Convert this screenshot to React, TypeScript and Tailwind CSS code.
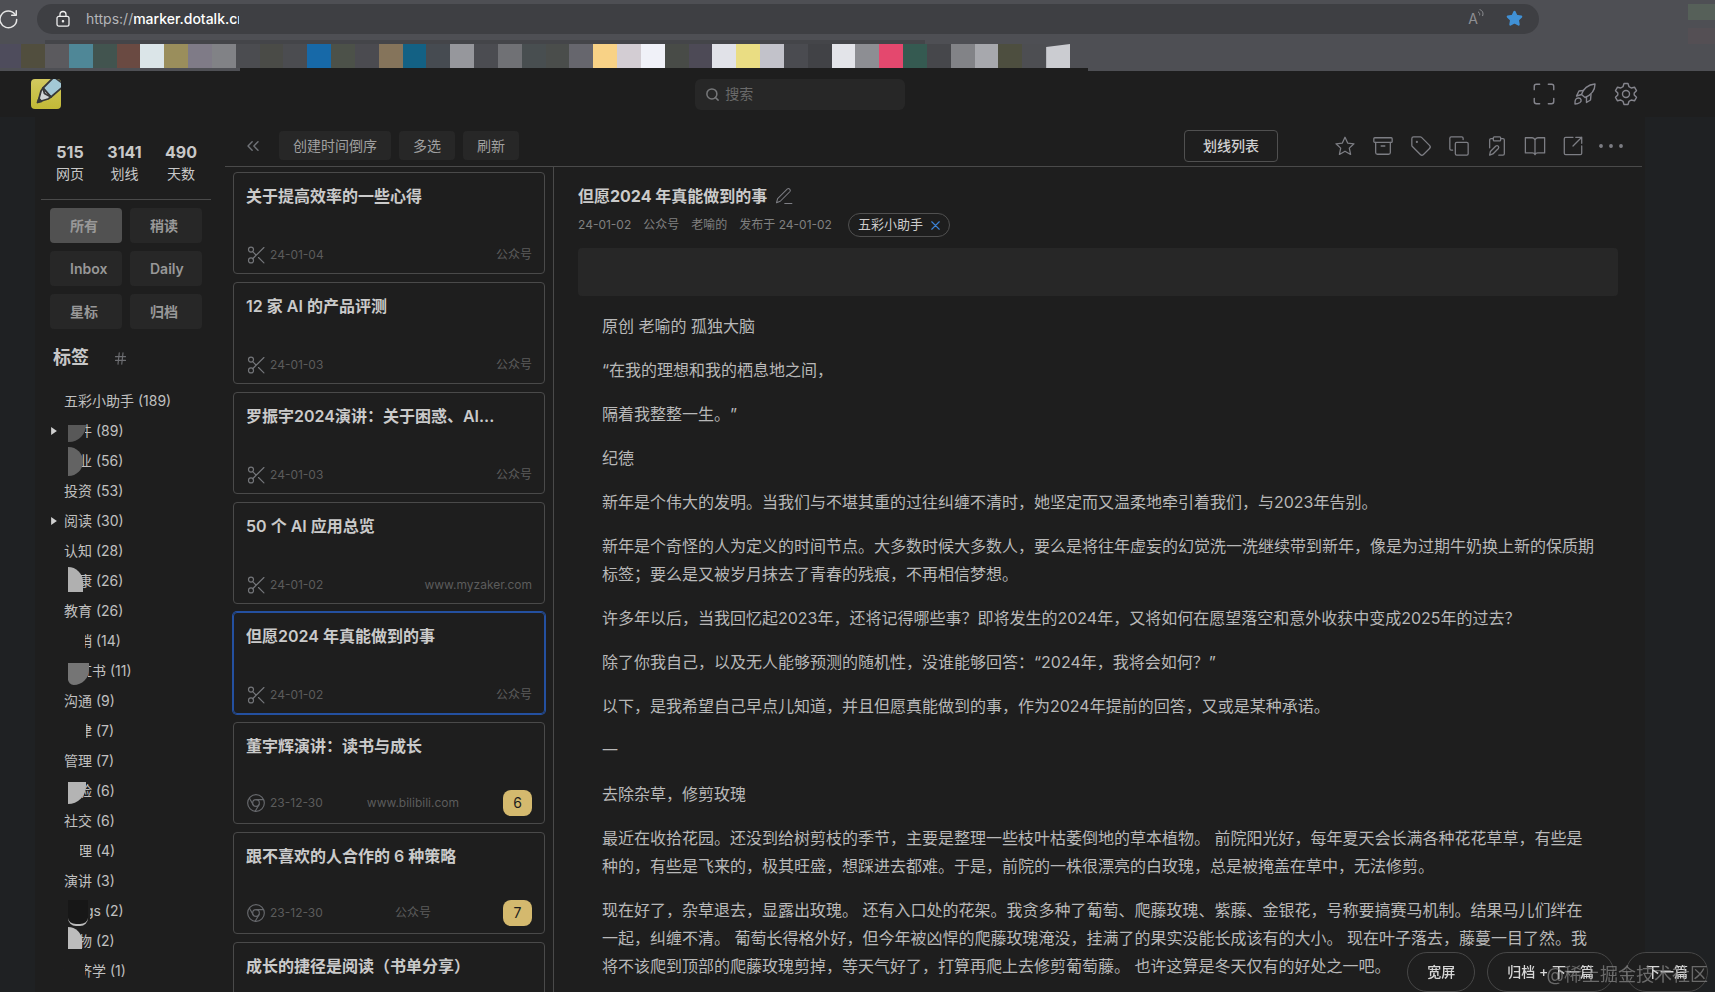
import type { ReactNode } from 'react';
import { Archive, BookOpen, ChevronsLeft, Hash, Maximize, Search, Star, Tag } from 'lucide-react';

type TagItem = {
  name: string;
  count: number;
  open?: boolean;
  cover?: string;
  blob?: string;
};

type Card = {
  title: string;
  date: string;
  source: string;
  notes?: number;
  active?: boolean;
};

const bookmarks = [
  'bg-[#5b5a5e]', 'bg-[#4f8797]', 'bg-[#42544f]', 'bg-[#6a4a42]', 'bg-[#dbe5e8]', 'bg-[#9a8e5c]', 'bg-[#7f7b87]', 'bg-[#818286]',
  'bg-[#4b4c50]', 'bg-[#4a4b47]', 'bg-[#4b4c50]', 'bg-[#1769a8]', 'bg-[#4c5149]', 'bg-[#4b4b50]', 'bg-[#85745b]', 'bg-[#136184]',
  'bg-[#464b51]', 'bg-[#96979c]', 'bg-[#4b4c51]', 'bg-[#707175]', 'bg-[#484e50]', 'bg-[#4a4d4b]', 'bg-[#66666d]', 'bg-[#f8d286]',
  'bg-[#d3cdd3]', 'bg-[#f0f1f8]', 'bg-[#484b47]', 'bg-[#4d4a56]', 'bg-[#e1e2e8]', 'bg-[#eadd83]', 'bg-[#c2c2ca]', 'bg-[#4a4b50]',
  'bg-[#414246]', 'bg-[#e3e4e9]', 'bg-[#8d8e93]', 'bg-[#e4486e]', 'bg-[#355a51]', 'bg-[#46474b]', 'bg-[#828387]', 'bg-[#a7a8ad]',
  'bg-[#4d4e3f]', 'bg-[#4d4e52]', 'bg-[#cbccd1] [clip-path:polygon(0_12%,100%_0,100%_100%,0_100%)]',
];

const stats = [
  { value: 515, label: '网页' },
  { value: 3141, label: '划线' },
  { value: 490, label: '天数' },
];

const filters = ['所有', '稍读', 'Inbox', 'Daily', '星标', '归档'];

const tags: TagItem[] = [
  { name: '五彩小助手', count: 189 },
  { name: '软件', count: 89, open: true, cover: 'w-[21px]', blob: 'top-[9px] h-[17px] w-[18px] rounded-br-full bg-[#585858]' },
  { name: '创业', count: 56, cover: 'w-[17px]', blob: 'top-px h-[29px] w-[15px] rounded-r-full bg-[#636363]' },
  { name: '投资', count: 53 },
  { name: '阅读', count: 30, open: true },
  { name: '认知', count: 28 },
  { name: '健康', count: 26, cover: 'w-[16px]', blob: 'top-px h-[25px] w-[15px] rounded-tr-full bg-[#b0b0b0]' },
  { name: '教育', count: 26 },
  { name: '营销', count: 14, cover: 'w-[21px]' },
  { name: '小红书', count: 11, cover: 'w-[24px]', blob: 'top-[7px] h-[22px] w-[21px] rounded-br-2xl rounded-bl-md bg-[#757575]' },
  { name: '沟通', count: 9 },
  { name: '法律', count: 7, cover: 'w-[22px]' },
  { name: '管理', count: 7 },
  { name: '体验', count: 6, cover: 'w-[18px]', blob: 'top-[6px] h-[22px] w-[18px] rounded-br-full bg-[#b4b4b4]' },
  { name: '社交', count: 6 },
  { name: '心理', count: 4, cover: 'w-[16px]' },
  { name: '演讲', count: 3 },
  { name: 'Blogs', count: 2, cover: 'w-[26px]', blob: 'top-1 h-[26px] w-[20px] rounded-b-lg border-b-2 border-[#bcbcbc] bg-[#171717]' },
  { name: '读物', count: 2, cover: 'w-[15px]', blob: 'top-px h-[22px] w-[14px] rounded-tr-full bg-[#bcbcbc]' },
  { name: '经济学', count: 1, cover: 'w-[21px]' },
];

const cards: Card[] = [
  { title: '关于提高效率的一些心得', date: '24-01-04', source: '公众号' },
  { title: '12 家 AI 的产品评测', date: '24-01-03', source: '公众号' },
  { title: '罗振宇2024演讲：关于困惑、AI...', date: '24-01-03', source: '公众号' },
  { title: '50 个 AI 应用总览', date: '24-01-02', source: 'www.myzaker.com' },
  { title: '但愿2024 年真能做到的事', date: '24-01-02', source: '公众号', active: true },
  { title: '董宇辉演讲：读书与成长', date: '23-12-30', source: 'www.bilibili.com', notes: 6 },
  { title: '跟不喜欢的人合作的 6 种策略', date: '23-12-30', source: '公众号', notes: 7 },
  { title: '成长的捷径是阅读（书单分享）', date: '23-12-30', source: '公众号' },
];

const paragraphs = [
  '原创 老喻的 孤独大脑',
  '“在我的理想和我的栖息地之间，',
  '隔着我整整一生。”',
  '纪德',
  '新年是个伟大的发明。当我们与不堪其重的过往纠缠不清时，她坚定而又温柔地牵引着我们，与2023年告别。',
  '新年是个奇怪的人为定义的时间节点。大多数时候大多数人，要么是将往年虚妄的幻觉洗一洗继续带到新年，像是为过期牛奶换上新的保质期标签；要么是又被岁月抹去了青春的残痕，不再相信梦想。',
  '许多年以后，当我回忆起2023年，还将记得哪些事？即将发生的2024年，又将如何在愿望落空和意外收获中变成2025年的过去？',
  '除了你我自己，以及无人能够预测的随机性，没谁能够回答：“2024年，我将会如何？”',
  '以下，是我希望自己早点儿知道，并且但愿真能做到的事，作为2024年提前的回答，又或是某种承诺。',
  '一',
  '去除杂草，修剪玫瑰',
  '最近在收拾花园。还没到给树剪枝的季节，主要是整理一些枝叶枯萎倒地的草本植物。 前院阳光好，每年夏天会长满各种花花草草，有些是种的，有些是飞来的，极其旺盛，想踩进去都难。于是，前院的一株很漂亮的白玫瑰，总是被掩盖在草中，无法修剪。',
  '现在好了，杂草退去，显露出玫瑰。 还有入口处的花架。我贪多种了葡萄、爬藤玫瑰、紫藤、金银花，号称要搞赛马机制。结果马儿们绊在一起，纠缠不清。 葡萄长得格外好，但今年被凶悍的爬藤玫瑰淹没，挂满了的果实没能长成该有的大小。 现在叶子落去，藤蔓一目了然。我将不该爬到顶部的爬藤玫瑰剪掉，等天气好了，打算再爬上去修剪葡萄藤。 也许这算是冬天仅有的好处之一吧。',
];

function Svg({ children, className = 'size-[22px]' }: { children: ReactNode; className?: string }) {
  return (
    <svg
      className={className}
      viewBox="0 0 24 24"
      fill="none"
      stroke="currentColor"
      strokeWidth={1.4}
      strokeLinecap="round"
      strokeLinejoin="round"
      aria-hidden="true"
    >
      {children}
    </svg>
  );
}

function IconButton({ label, children }: { label: string; children: ReactNode }) {
  return (
    <button type="button" aria-label={label} className="flex size-[22px] items-center justify-center">
      {children}
    </button>
  );
}

function BrowserBar() {
  return (
    <div className="relative h-[71px] shrink-0 bg-[#4e4f54]">
      <div className="flex h-9 items-center gap-5 pt-px">
        <button type="button" aria-label="刷新页面" className="w-[17px] text-[#e6e6e6]">
          <Svg className="size-[20px]">
            <path d="M18 6.5A10 10 0 1 0 20 12.5" strokeWidth={1.8} />
            <path d="M19.5 2v5.5H14" strokeWidth={1.8} />
          </Svg>
        </button>
        <div className="flex h-[30px] w-[1502px] max-w-[88%] items-center rounded-full bg-[#3e3f43] pr-4 pl-[17px]">
          <Svg className="size-[18px] shrink-0 text-[#f0f0f0]">
            <rect x="4" y="8.5" width="16" height="13" rx="2.5" strokeWidth={1.7} />
            <path d="M8 8.5V6a4 4 0 0 1 8 0v2.5" strokeWidth={1.7} />
            <circle cx="12" cy="15" r="1" fill="currentColor" />
          </Svg>
          <div className="ml-[14px] w-[153px] overflow-hidden text-sm whitespace-nowrap text-[#b4b5b8]">
            https://<span className="font-medium text-white">marker.dotalk.cn</span>
          </div>
          <div className="ml-auto flex items-center gap-5">
            <span className="flex text-sm leading-5 text-[#8e8f93]">
              A
              <Svg className="size-2">
                <path d="M1 9c4 2 5 5 4 9M6 2c8 3 11 10 8 18" strokeWidth={3} />
              </Svg>
            </span>
            <Star className="size-[17px] text-[#4091d6]" fill="currentColor" />
          </div>
        </div>
      </div>
      <div className="absolute top-10 left-[45px] h-1 w-[880px] bg-[#444549]" />
      <div className="absolute inset-x-0 top-11 flex h-6">
        <span className="w-[21px] bg-[#4e4c5c]" />
        <span className="w-6 bg-[#514e3e]" />
        <div className="grid w-[1025px] auto-cols-fr grid-flow-col">
          {bookmarks.map((color, i) => (
            <span key={i} className={color} />
          ))}
        </div>
      </div>
      <div className="absolute top-[68px] left-[240px] h-[3px] w-[848px] bg-[#1e1e1e]" />
      <div className="absolute top-1 right-0 h-4 w-[27px] bg-[#566059]" />
      <div className="absolute top-7 right-0 h-4 w-[27px] bg-[#544f54]" />
    </div>
  );
}

function Header() {
  return (
    <header className="flex h-[46px] shrink-0 items-center pr-[78px] pl-[31px]">
      <svg className="size-[30px]" viewBox="0 0 30 30" aria-label="logo">
        <defs>
          <linearGradient id="logo-bg" x1="0" y1="0" x2="0" y2="1">
            <stop offset="0" stopColor="#d2c95f" />
            <stop offset="1" stopColor="#c2b936" />
          </linearGradient>
          <clipPath id="logo-clip">
            <rect width="30" height="30" rx="4" />
          </clipPath>
        </defs>
        <g clipPath="url(#logo-clip)" stroke="#37383a" strokeWidth="1.8" strokeLinejoin="round">
          <rect width="30" height="30" fill="url(#logo-bg)" stroke="none" />
          <path d="M12 9 23-2 34 6 20 18Z" fill="#a3c8d6" />
          <path d="M12 9 20 18 17 20 7 23 10 12Z" fill="#cfd4d6" />
          <path d="M12 9l1.5 5.500 6.500 3.500" fill="none" />
          <path d="M6.500 23.500l1.500-4 2.500 2.800Z" fill="#37383a" />
        </g>
      </svg>
      <label className="ml-[39.5%] flex h-[31px] w-[210px] items-center gap-[5px] rounded-md bg-[#272727] px-[10px]">
        <Search className="size-[15px] text-[#77787a]" strokeWidth={2.4} />
        <input
          type="text"
          aria-label="搜索"
          placeholder="搜索"
          className="min-w-0 flex-1 bg-transparent text-sm outline-none placeholder:text-[#6a6a6a]"
        />
      </label>
      <div className="ml-auto flex items-center gap-[19px] text-[#85858d]">
        <IconButton label="全屏">
          <Maximize className="size-[26px] shrink-0" strokeWidth={1.3} />
        </IconButton>
        <IconButton label="快速开始">
          <Svg className="size-6 shrink-0">
            <path d="M8.5 12.5C10 7 15 2.500 22 2c0 6-4 11-10 13.500Z" />
            <path d="M10.500 8.500 6 9l-2.500 5 5-1.500M13.500 15v5.500l4-2.500 .5-5.500" />
            <path d="M2 22c-.3-4 .7-6 3.500-6s3.500 3 1.500 4.500C5.500 21.500 4 22 2 22Z" />
          </Svg>
        </IconButton>
        <IconButton label="设置">
          <Svg className="size-6 shrink-0">
            <path d="M10 1.500h4l1 3.200 2.200 1.300 3.300-.8 2 3.500-2.300 2.300v2l2.300 2.300-2 3.500-3.300-.8-2.200 1.300-1 3.200h-4l-1-3.200L6.800 18l-3.300.8-2-3.500L3.800 13v-2L1.500 8.700l2-3.500 3.300.8L9 4.700Z" />
            <circle cx="12" cy="12" r="3.500" />
          </Svg>
        </IconButton>
      </div>
    </header>
  );
}

function Sidebar() {
  return (
    <aside className="w-[190px] shrink-0 pt-6 pr-[14px] pl-[6px]">
      <div className="flex justify-between border-b border-[#4a4a4a] pr-[14px] pb-[14px] pl-[15px] text-center text-[#c8c8c8]">
        {stats.map((s) => (
          <div key={s.label}>
            <div className="text-base leading-[22px] font-bold">{s.value}</div>
            <div className="text-sm leading-[22px]">{s.label}</div>
          </div>
        ))}
      </div>
      <div className="mx-[9px] mt-2 grid grid-cols-2 gap-2">
        {filters.map((name, i) => (
          <button
            key={name}
            type="button"
            className={`h-[35px] rounded pl-5 text-left text-sm font-semibold text-[#989898] ${i === 0 ? 'bg-[#515151]' : 'bg-[#272727]'}`}
          >
            {name}
          </button>
        ))}
      </div>
      <div className="mt-[15px] ml-3 flex h-7 items-center gap-6">
        <h2 className="text-lg font-bold text-[#c8c8c8]">标签</h2>
        <Hash className="size-[15px] text-[#6d6e72]" strokeWidth={1.8} />
      </div>
      <ul className="mt-[14px]">
        {tags.map((tag) => (
          <li key={tag.name} className="relative flex h-[30px] items-center pl-[23px] text-sm whitespace-nowrap text-[#c0c0c0]">
            {tag.open && (
              <svg className="absolute left-[9px] size-[8px]" viewBox="0 0 7 7" fill="#d0d0d0" aria-hidden="true">
                <path d="M1 0l5 3.500-5 3.500Z" />
              </svg>
            )}
            <a href="#">{tag.name} ({tag.count})</a>
            {tag.cover && <span className={`absolute left-[23px] h-5 bg-[#1e1e1e] ${tag.cover}`} />}
            {tag.blob && <span className={`absolute left-[27px] ${tag.blob}`} />}
          </li>
        ))}
      </ul>
    </aside>
  );
}

function Toolbar() {
  return (
    <div className="flex h-[50px] shrink-0 items-center border-b border-[#4a4a4a] pt-2 pr-5 pl-[18px] text-sm">
      <button type="button" aria-label="收起" className="text-[#707378]">
        <ChevronsLeft className="size-5" strokeWidth={1.7} />
      </button>
      <div className="ml-4 flex gap-2 text-[#a0a0a0]">
        <button type="button" className="h-[29px] rounded bg-[#272727] px-[14px]">创建时间倒序</button>
        <button type="button" className="h-[29px] rounded bg-[#272727] px-[14px]">多选</button>
        <button type="button" className="h-[29px] rounded bg-[#272727] px-[14px]">刷新</button>
      </div>
      <button type="button" className="ml-auto h-8 rounded border border-[#505050] px-[18px] font-medium text-[#d0d0d0]">
        划线列表
      </button>
      <div className="ml-14 flex gap-4 text-[#7d7e84]">
        <IconButton label="星标">
          <Svg>
            <path d="m12 2.500 2.900 6.300 6.900.8-5.100 4.700 1.400 6.900-6.100-3.500-6.100 3.500 1.400-6.900-5.100-4.700 6.900-.8Z" />
          </Svg>
        </IconButton>
        <IconButton label="归档">
          <Archive className="size-[22px]" strokeWidth={1.4} />
        </IconButton>
        <IconButton label="标签">
          <Tag className="size-[22px]" strokeWidth={1.4} />
        </IconButton>
        <IconButton label="复制">
          <Svg>
            <rect x="8" y="8" width="14" height="14" rx="1.500" />
            <path d="M5 16.500H3.500A1.500 1.500 0 0 1 2 15V3.500A1.500 1.500 0 0 1 3.500 2H15a1.500 1.500 0 0 1 1.500 1.500V5" />
          </Svg>
        </IconButton>
        <IconButton label="笔记">
          <Svg>
            <path d="M8 4H5.500A1.500 1.500 0 0 0 4 5.500V14M16 4h2.500A1.500 1.500 0 0 1 20 5.500v15a1.500 1.500 0 0 1-1.500 1.500H14" />
            <rect x="8" y="2" width="8" height="4.500" rx="1" />
            <path d="M4 22l.8-4 6-6c1.800-1.300 4 .8 2.700 2.700l-6 6Z" />
          </Svg>
        </IconButton>
        <IconButton label="阅读">
          <Svg>
            <path d="M12 5.500C11.500 4 10.500 3 9 3H1.500v16.500H9c1.500 0 2.500.8 3 2 .5-1.200 1.500-2 3-2h7.500V3H15c-1.500 0-2.500 1-3 2.500Zm0 0v16" />
          </Svg>
        </IconButton>
        <IconButton label="打开原文">
          <Svg>
            <path d="M12 2.500H4A1.500 1.500 0 0 0 2.500 4v16A1.500 1.500 0 0 0 4 21.500h16a1.500 1.500 0 0 0 1.500-1.500v-8M15 2.500h6.500V9M21.500 2.500 12 12" />
          </Svg>
        </IconButton>
        <IconButton label="更多">
          <Svg className="size-6 shrink-0">
            <circle cx="2" cy="12" r="1.200" fill="currentColor" />
            <circle cx="12" cy="12" r="1.200" fill="currentColor" />
            <circle cx="22" cy="12" r="1.200" fill="currentColor" />
          </Svg>
        </IconButton>
      </div>
    </div>
  );
}

function CardItem({ card }: { card: Card }) {
  return (
    <li
      className={`flex h-[102px] shrink-0 flex-col justify-between rounded border px-3 pt-[11px] ${card.notes ? 'pb-[7px]' : 'pb-[5px]'} ${
        card.active ? 'border-[#2450a0] ring-1 ring-[#2450a0]' : 'border-[#4a4a4a]'
      }`}
    >
      <h3 className="truncate text-base leading-6 font-semibold text-[#cacaca]">{card.title}</h3>
      <div className="flex h-[26px] items-center justify-between text-xs text-[#5c5c5c]">
        <span className="flex items-center gap-1">
          {card.notes ? (
            <Svg className="size-[20px] text-[#66686c]">
              <circle cx="12" cy="12" r="10" />
              <circle cx="12" cy="12" r="4" />
              <path d="M12 8h9M15.500 14 11 22M8.500 14 4 6" />
            </Svg>
          ) : (
            <Svg className="size-[20px] text-[#74767a]">
              <circle cx="6" cy="5.500" r="3" />
              <circle cx="6" cy="18.500" r="3" />
              <path d="M8 8l4 4M8 16.500 21.500 3M15 15l6.500 6.500" />
            </Svg>
          )}
          {card.date}
        </span>
        <span>{card.source}</span>
        {card.notes && (
          <span className="flex h-[26px] w-[29px] items-center justify-center rounded-lg bg-[#d4b96e] text-sm text-[#1e1e1e]">
            {card.notes}
          </span>
        )}
      </div>
    </li>
  );
}

function Reader() {
  return (
    <article className="min-w-0 flex-1 overflow-hidden px-6 pt-[17px]">
      <div className="flex h-6 items-center gap-2">
        <h1 className="text-base font-bold text-[#cacaca]">但愿2024 年真能做到的事</h1>
        <button type="button" aria-label="编辑标题" className="text-[#7d7e84]">
          <Svg className="size-[18px]">
            <path d="M2 21l1.500-5.500L16.500 2.500c2-1.500 5 1.500 3.500 3.500L7 19Z M13 22h9.500" />
          </Svg>
        </button>
      </div>
      <div className="mt-[5px] flex h-6 items-center text-xs text-[#808080]">
        <span>24-01-02</span>
        <span className="ml-3">公众号</span>
        <span className="ml-3">老喻的</span>
        <span className="ml-3">发布于 24-01-02</span>
        <span className="ml-4 flex h-6 items-center gap-2 rounded-full border border-[#505050] px-[9px] text-[13px] text-[#cccccc]">
          五彩小助手
          <button type="button" aria-label="移除标签" className="text-[#3b82d6]">
            <Svg className="size-[9px]">
              <path d="M2 2l20 20M22 2 2 22" strokeWidth={3} />
            </Svg>
          </button>
        </span>
      </div>
      <div className="mt-[11px] h-12 rounded-sm bg-[#272727]" />
      <div className="mt-4 flex flex-col gap-4 px-6 text-base leading-7 text-[#b8b8b8]">
        {paragraphs.map((text) => (
          <p key={text}>{text}</p>
        ))}
      </div>
    </article>
  );
}

export default function App() {
  return (
    <div className="flex h-screen flex-col overflow-hidden bg-[#1e1e1e] font-['Inter','Noto_Sans_CJK_SC',sans-serif] [text-spacing-trim:space-all]">
      <BrowserBar />
      <Header />
      <div className="flex min-h-0 flex-1 bg-[#1f2123] pr-[70px] pl-[35px]">
        <main className="flex min-w-0 flex-1 overflow-hidden bg-[#1e1e1e] pr-[3px]">
          <Sidebar />
          <section className="flex min-w-0 flex-1 flex-col">
            <Toolbar />
            <div className="flex min-h-0 flex-1">
              <ul className="flex w-[329px] shrink-0 flex-col gap-2 overflow-hidden border-r border-[#4a4a4a] px-2 pt-[5px]">
                {cards.map((card) => (
                  <CardItem key={card.title} card={card} />
                ))}
              </ul>
              <Reader />
            </div>
          </section>
        </main>
      </div>

      {/* Floating actions */}
      <div className="fixed right-[7px] bottom-0 flex gap-3 text-sm font-medium text-[#d6d6d6]">
        <button type="button" className="h-10 rounded-full border border-[#484848] bg-[#1e1e1e] px-[19px]">宽屏</button>
        <button type="button" className="h-10 rounded-full border border-[#484848] bg-[#1e1e1e] px-[19px]">归档 + 下一篇</button>
        <button type="button" className="h-10 rounded-full border border-[#484848] bg-[#1e1e1e] px-[19px]">下一篇</button>
      </div>
      <div className="pointer-events-none fixed right-[7px] bottom-[5px] text-lg leading-6 text-[#8a8a8a]/70">@稀土掘金技术社区</div>
    </div>
  );
}
